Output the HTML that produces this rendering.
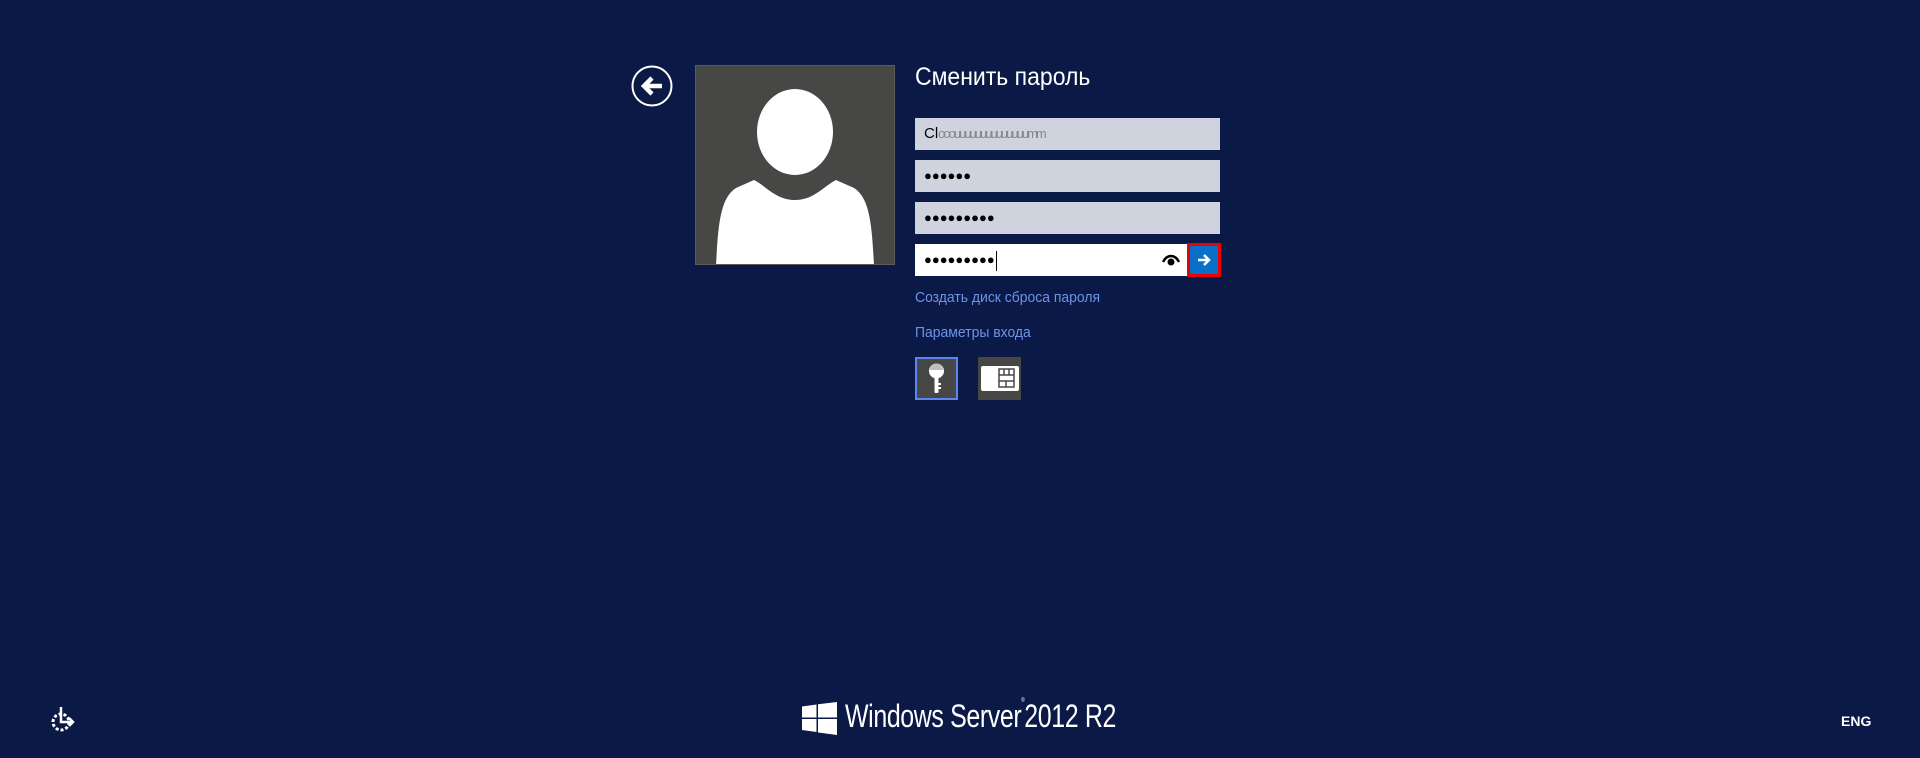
<!DOCTYPE html>
<html><head><meta charset="utf-8"><style>
*{margin:0;padding:0;box-sizing:border-box}
body{width:1920px;height:758px;background:#0a1945;position:relative;overflow:hidden;font-family:"Liberation Sans",sans-serif}
.a{position:absolute}
.f{position:absolute;left:915px;width:305px;height:32px;background:#cfd3de;color:#000;font-size:16px;padding-left:9px;line-height:32px}
.dots{letter-spacing:0px;font-size:13px;font-weight:bold}
.lnk{position:absolute;left:915px;color:#6f92ea;font-size:15px;transform:scaleX(.93);transform-origin:0 0;white-space:nowrap}
</style></head><body>
<svg class="a" style="left:631px;top:65px" width="42" height="42" viewBox="0 0 42 42"><circle cx="21" cy="21" r="19.5" fill="none" stroke="#fff" stroke-width="2"/><path d="M31 21H14M21 13l-8 8 8 8" fill="none" stroke="#fff" stroke-width="4.5"/></svg>
<div class="a" style="left:695px;top:65px;width:200px;height:200px;background:#474845;border:1px solid #5a5b58;overflow:hidden">
<svg width="200" height="200" viewBox="0 0 200 200"><ellipse cx="99" cy="66" rx="38" ry="43" fill="#fff"/><path d="M20 200 C22 160 24 132 40 122 L58 114 C70 120 80 134 99 134 C118 134 128 120 140 114 L158 122 C174 132 176 160 178 200Z" fill="#fff"/></svg></div>
<div class="a" style="left:915px;top:63px;color:#fff;font-size:25px;transform:scaleX(.92);transform-origin:0 0;white-space:nowrap">Сменить пароль</div>
<div class="f" style="top:118px;font-size:15px">Cl<span style="color:#888;letter-spacing:-2px;font-size:13px">ooouuuuuuuuuuuuuumm</span></div>
<div class="f dots" style="top:160px">●●●●●●</div>
<div class="f dots" style="top:202px">●●●●●●●●●</div>
<div class="f dots" style="top:244px;background:#fff;width:272px">●●●●●●●●●<span style="display:inline-block;width:1px;height:20px;background:#000;vertical-align:middle;margin-left:1px"></span></div>
<svg class="a" style="left:1162px;top:254px" width="18" height="12" viewBox="0 0 18 12"><path d="M1 8C5 0 13 0 17 8" fill="none" stroke="#000" stroke-width="2.5"/><circle cx="9" cy="8" r="3.5" fill="#000"/></svg>
<div class="a" style="left:1187px;top:243px;width:34px;height:34px;border:3px solid #e00;background:#0a6fc9"><svg width="28" height="28" viewBox="0 0 28 28"><path d="M8 14h11M14 9l5 5-5 5" fill="none" stroke="#fff" stroke-width="2.5"/></svg></div>
<div class="lnk" style="top:289px">Создать диск сброса пароля</div>
<div class="lnk" style="top:324px">Параметры входа</div>
<div class="a" style="left:915px;top:357px;width:43px;height:43px;background:#474845;border:2px solid #5c85ef"><svg width="39" height="39" viewBox="0 0 39 39"><circle cx="19.5" cy="12" r="7.5" fill="#fff"/><rect x="17.5" y="15" width="4" height="19" rx="1" fill="#fff"/><rect x="21" y="24" width="3" height="2" fill="#fff"/><rect x="21" y="28" width="3" height="2" fill="#fff"/><path d="M13 11a6.5 6.5 0 0 1 13 0z" fill="#474845" opacity=".35"/></svg></div>
<div class="a" style="left:978px;top:357px;width:43px;height:43px;background:#474845"><svg width="43" height="43" viewBox="0 0 43 43"><rect x="3" y="9" width="38" height="25" rx="2" fill="#fff"/><rect x="21" y="12" width="15" height="18" fill="none" stroke="#474845" stroke-width="1.5"/><path d="M21 18h15M21 24h15M26 12v6M31 12v6M28 24v6" stroke="#474845" stroke-width="1.5"/></svg></div>
<svg class="a" style="left:50px;top:704px" width="30" height="30" viewBox="0 0 30 30"><circle cx="11" cy="18" r="8" fill="none" stroke="#fff" stroke-width="3" stroke-dasharray="3 2"/><path d="M11 3v15h11" fill="none" stroke="#fff" stroke-width="2.5"/><path d="M19 14l4 4-4 4" fill="none" stroke="#fff" stroke-width="2.5"/></svg>
<svg class="a" style="left:802px;top:702px" width="36" height="33" viewBox="0 0 36 33"><path d="M0 4.5L14.5 2.5V15.5H0Z M16 2.3L35 0V15.5H16Z M0 17H14.5V30L0 28Z M16 17H35V33L16 30.5Z" fill="#fff"/></svg>
<div class="a" style="left:845px;top:698px;color:#fff;font-size:32px;transform:scaleX(.78);transform-origin:0 0;white-space:nowrap;letter-spacing:-.5px">Windows Server<span style="font-size:6px;vertical-align:top">®</span>2012 R2</div>
<div class="a" style="left:1841px;top:713px;color:#fff;font-size:14px;font-weight:bold">ENG</div>
</body></html>
